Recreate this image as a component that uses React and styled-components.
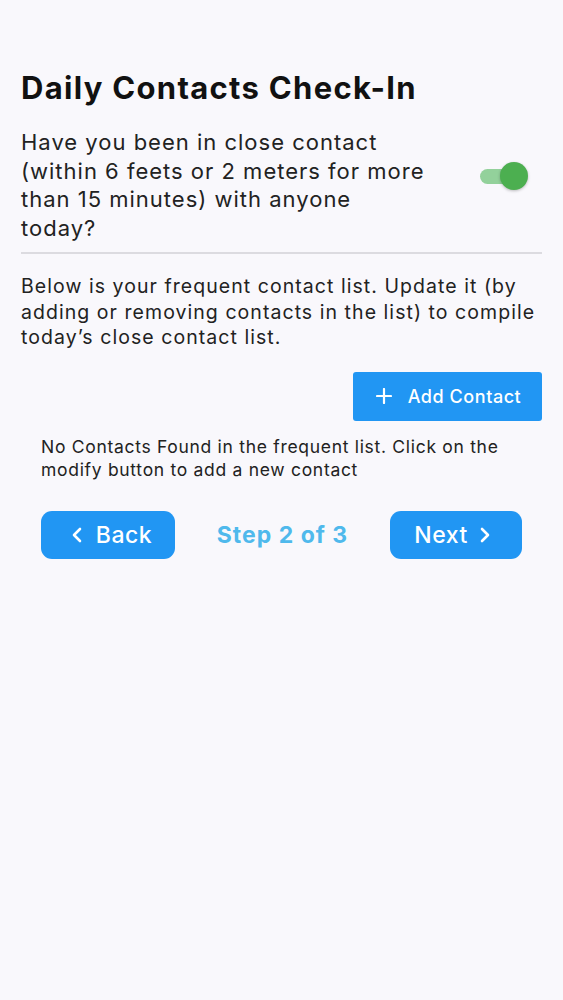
import React from 'react'
import styled, { createGlobalStyle } from 'styled-components'

const Global = createGlobalStyle`
  html, body {
    margin: 0;
    padding: 0;
    background: #f9f8fc;
  }
  body {
    font-family: Inter, "Noto Sans", Roboto, sans-serif;
    color: #1c1c1e;
  }
`

const Screen = styled.div`
  min-height: 1000px;
  background: #f9f8fc;
  padding: 68px 21px 0 21px;
  box-sizing: border-box;
`

const Title = styled.h1`
  margin: 0 0 20px 0;
  font-size: 31px;
  font-weight: 700;
  line-height: 40px;
  color: #111;
  letter-spacing: 1.3px;
`

const QuestionRow = styled.div`
  display: flex;
  align-items: center;
  justify-content: space-between;
  padding-bottom: 10px;
  border-bottom: 2px solid #dcdbe0;
`

const Question = styled.p`
  margin: 0;
  width: 411px;
  font-size: 22px;
  line-height: 28.5px;
  letter-spacing: 1px;
  color: #222;
`

const Toggle = styled.div`
  position: relative;
  width: 48px;
  height: 28px;
  margin-right: 14px;
  margin-top: -18px;
  display: flex;
  align-items: center;
`

const Track = styled.div`
  width: 38px;
  height: 15px;
  border-radius: 8px;
  background: #93d19b;
`

const Thumb = styled.div`
  position: absolute;
  right: 0;
  top: 0;
  width: 28px;
  height: 28px;
  border-radius: 50%;
  background: #4caf50;
  box-shadow: 0 1px 3px rgba(0, 0, 0, 0.25);
`

const Body = styled.p`
  margin: 20px 0 0 0;
  font-size: 19.5px;
  line-height: 25.5px;
  letter-spacing: 1.05px;
  color: #222;
`

const ActionRow = styled.div`
  display: flex;
  justify-content: flex-end;
  margin-top: 21px;
`

const AddButton = styled.button`
  display: flex;
  align-items: center;
  justify-content: center;
  gap: 16px;
  width: 189px;
  height: 49px;
  border: none;
  border-radius: 3px;
  background: #2196f3;
  color: #fff;
  font-family: inherit;
  font-size: 18px;
  font-weight: 500;
  letter-spacing: 0.55px;
  cursor: pointer;
  padding: 0 0 0 2px;
`

const Empty = styled.p`
  margin: 14px 20px 0 20px;
  font-size: 17.5px;
  line-height: 23px;
  letter-spacing: 0.7px;
  color: #222;
`

const Nav = styled.div`
  display: flex;
  align-items: center;
  justify-content: space-between;
  margin: 30px 20px 0 20px;
`

const NavButton = styled.button`
  display: flex;
  align-items: center;
  justify-content: center;
  gap: ${({ gap }) => gap}px;
  width: ${({ w }) => w}px;
  height: 48px;
  border: none;
  border-radius: 11px;
  background: #2196f3;
  color: #fff;
  font-family: inherit;
  font-size: 23px;
  font-weight: 500;
  letter-spacing: 0.5px;
  padding: 0 ${({ right }) => right}px 0 ${({ left }) => left}px;
  cursor: pointer;
`

const Step = styled.span`
  font-size: 23px;
  font-weight: 700;
  letter-spacing: 1px;
  color: #4fb9ec;
`

const Chevron = ({ dir }) => (
  <svg width="14" height="18" viewBox="0 0 14 18" fill="none">
    <path
      d={dir === 'left' ? 'M10 3 L4 9 L10 15' : 'M4 3 L10 9 L4 15'}
      stroke="#fff"
      strokeWidth="2.6"
      strokeLinecap="round"
      strokeLinejoin="round"
    />
  </svg>
)

const Plus = () => (
  <svg width="16" height="16" viewBox="0 0 16 16">
    <path d="M8 1 V15 M1 8 H15" stroke="#fff" strokeWidth="2.2" strokeLinecap="round" />
  </svg>
)

const App = () => {
  return (
    <>
      <Global />
      <Screen>
        <Title>Daily Contacts Check-In</Title>
        <QuestionRow>
          <Question>
            Have you been in close contact (within 6 feets or 2 meters for more than 15 minutes) with anyone today?
          </Question>
          <Toggle>
            <Track />
            <Thumb />
          </Toggle>
        </QuestionRow>
        <Body>
          Below is your frequent contact list. Update it (by adding or removing contacts in the list) to compile today’s close contact list.
        </Body>
        <ActionRow>
          <AddButton>
            <Plus />
            Add Contact
          </AddButton>
        </ActionRow>
        <Empty>
          No Contacts Found in the frequent list. Click on the modify button to add a new contact
        </Empty>
        <Nav>
          <NavButton w={134} gap={12} left={6} right={0}>
            <Chevron dir="left" />
            Back
          </NavButton>
          <Step>Step 2 of 3</Step>
          <NavButton w={132} gap={10} left={0} right={6}>
            Next
            <Chevron dir="right" />
          </NavButton>
        </Nav>
      </Screen>
    </>
  )
}

export default App
